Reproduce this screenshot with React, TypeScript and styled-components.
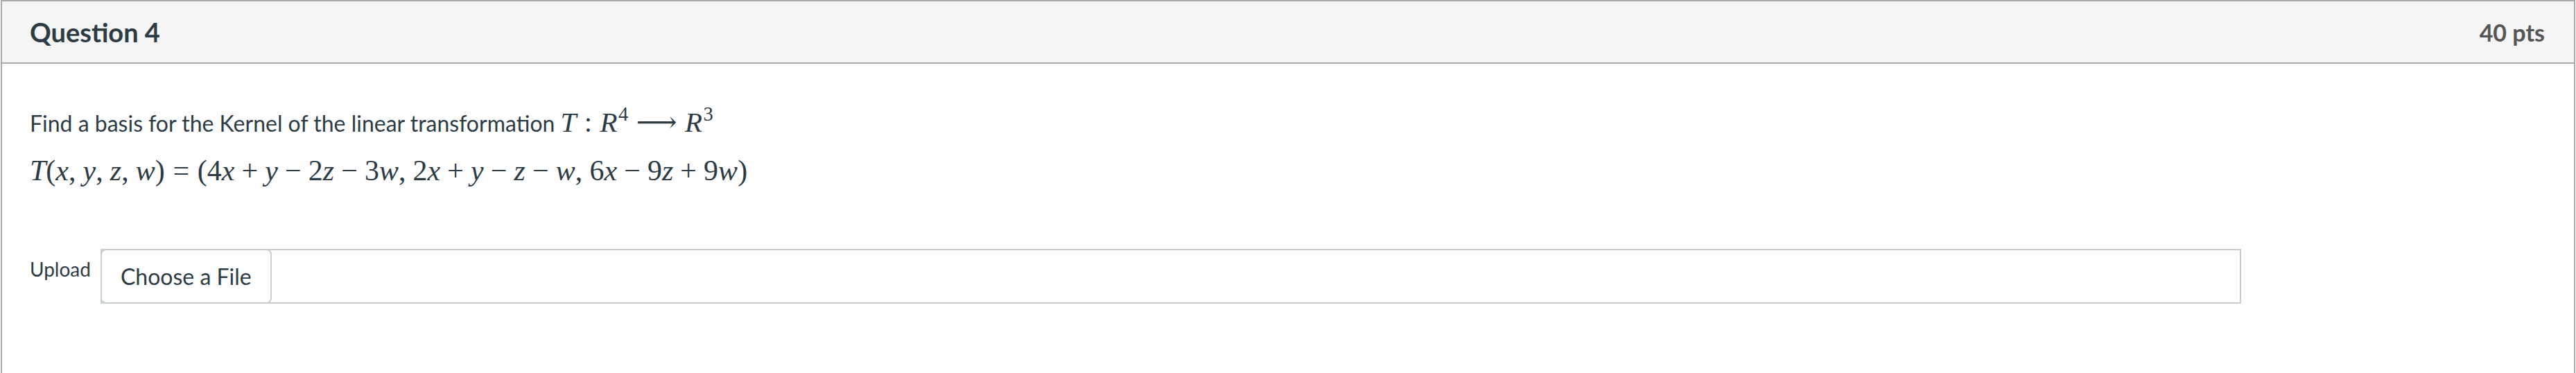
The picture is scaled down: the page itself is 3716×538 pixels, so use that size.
import * as React from 'react';
import styled, { createGlobalStyle } from 'styled-components';

const GlobalStyle = createGlobalStyle`
  html, body {
    margin: 0;
    padding: 0;
    background: #ffffff;
    overflow: hidden;
  }
  body {
    font-family: Lato, "Open Sans", sans-serif;
    color: #2d3b45;
  }
`;

type Space = 'comma' | 'med' | 'thick';

const spaceEm: Record<Space, string> = {
  comma: '0 0.24em 0 0',
  med: '0 0.24em',
  thick: '0 0.278em',
};

export default function App() {
  return (
    <>
      <GlobalStyle />
      <QuestionCard>
        <Header>
          <Title>Question 4</Title>
          <Points>40 pts</Points>
        </Header>

        <Body>
          <Paragraph>
            Find a basis for the Kernel of the linear transformation{' '}
            <Math>
              <V>T</V>
              <Op space="thick">:</Op>
              <V>R</V>
              <Sup>4</Sup>
              <Op space="thick">⟶</Op>
              <V>R</V>
              <Sup>3</Sup>
            </Math>
          </Paragraph>
          <Paragraph>
            <Math wide>
              <V>T</V>(<V>x</V><Op space="comma">,</Op><V>y</V><Op space="comma">,</Op><V>z</V><Op space="comma">,</Op><V>w</V>)
              <Op space="thick">=</Op>
              (4<V>x</V><Op space="med">+</Op><V>y</V><Op space="med">−</Op>2<V>z</V><Op space="med">−</Op>3<V>w</V><Op space="comma">,</Op>
              2<V>x</V><Op space="med">+</Op><V>y</V><Op space="med">−</Op><V>z</V><Op space="med">−</Op><V>w</V><Op space="comma">,</Op>
              6<V>x</V><Op space="med">−</Op>9<V>z</V><Op space="med">+</Op>9<V>w</V>)
            </Math>
          </Paragraph>

          <UploadRow>
            <UploadLabel>Upload</UploadLabel>
            <FileBox>
              <ChooseButton type="button">Choose a File</ChooseButton>
            </FileBox>
          </UploadRow>
        </Body>
      </QuestionCard>
    </>
  );
}

const QuestionCard = styled.div`
  box-sizing: border-box;
  min-height: 600px;
  margin: 0 1px;
  border: 2px solid #aaaaaa;
  border-bottom: none;
  background: #ffffff;
`;

const Header = styled.div`
  display: flex;
  align-items: center;
  justify-content: space-between;
  height: 88px;
  padding: 0 42px 0 40px;
  background: #f5f5f5;
  border-bottom: 2px solid #aaaaaa;
`;

const Title = styled.div`
  font-size: 38px;
  font-weight: 700;
  color: #2d3b45;
`;

const Points = styled.div`
  font-size: 34px;
  font-weight: 700;
  color: #565656;
`;

const Body = styled.div`
  padding: 60px 40px 40px;
`;

const Paragraph = styled.p`
  margin: 0 0 20px;
  font-size: 32px;
  line-height: 48px;
  color: #2d3b45;
`;

const Math = styled.span<{ wide?: boolean }>`
  font-family: "Liberation Serif", "DejaVu Serif", serif;
  font-size: ${({ wide }) => (wide ? '42px' : '41px')};
  white-space: nowrap;
`;

const V = styled.span`
  font-style: italic;
`;

const Op = styled.span<{ space: Space }>`
  margin: ${({ space }) => spaceEm[space]};
`;

const Sup = styled.sup`
  font-size: 0.7em;
  line-height: 0;
  vertical-align: 0.55em;
  margin-left: 0.05em;
`;

const UploadRow = styled.div`
  display: flex;
  align-items: flex-start;
  gap: 14px;
  margin-top: 87px;
`;

const UploadLabel = styled.span`
  margin-top: 8px;
  font-size: 28px;
  line-height: 42px;
  color: #2d3b45;
`;

const FileBox = styled.div`
  box-sizing: border-box;
  display: flex;
  width: 3088px;
  height: 79px;
  border: 2px solid #c7cdd1;
`;

const ChooseButton = styled.button`
  box-sizing: border-box;
  height: 79px;
  margin: -2px 0 0 -2px;
  padding: 0 27px;
  background: #ffffff;
  border: 2px solid #c7cdd1;
  border-radius: 8px;
  font-family: Lato, "Open Sans", sans-serif;
  font-size: 32px;
  color: #2d3b45;
  cursor: pointer;
`;
